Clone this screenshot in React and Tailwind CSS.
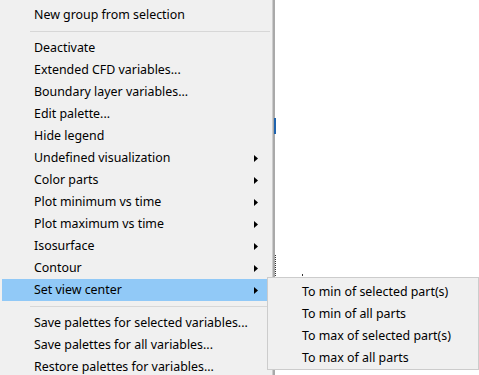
import React from "react";

const Arrow = () => (
  <svg width="4" height="7" viewBox="0 0 4 7" className="block">
    <path d="M0 0 L4 3.5 L0 7 Z" fill="#000" />
  </svg>
);

function Row({ label, sub, active }) {
  return (
    <div
      className={
        "h-[22px] flex items-center ml-[2px] pl-[32px] pr-[14px] " +
        (active ? "bg-[#91c9f7]" : "")
      }
    >
      <span className="flex-1 whitespace-nowrap leading-[20px]">{label}</span>
      {sub && <Arrow />}
    </div>
  );
}

const Sep = () => (
  <div className="h-[11px] flex items-center pl-[30px] pr-[2px]">
    <div className="h-px w-full bg-[#d7d7d7]" />
  </div>
);

export default function App() {
  const items = [
    ["Deactivate"],
    ["Extended CFD variables..."],
    ["Boundary layer variables..."],
    ["Edit palette..."],
    ["Hide legend"],
    ["Undefined visualization", true],
    ["Color parts", true],
    ["Plot minimum vs time", true],
    ["Plot maximum vs time", true],
    ["Isosurface", true],
    ["Contour", true],
  ];
  return (
    <div
      className="relative w-[479px] h-[375px] bg-white overflow-hidden text-[12.4px] text-black"
      style={{ fontFamily: '"Segoe UI", "Noto Sans", sans-serif' }}
    >
      <div className="flex h-full">
        <div className="w-[273px] h-full bg-[#f0f0f0] border-r border-[#cccccc] pt-[4px]">
          <Row label="New group from selection" />
          <Sep />
          {items.map(([l, s]) => (
            <Row key={l} label={l} sub={s} />
          ))}
          <Row label="Set view center" sub active />
          <Sep />
          <Row label="Save palettes for selected variables..." />
          <Row label="Save palettes for all variables..." />
          <Row label="Restore palettes for variables..." />
        </div>
        <div className="w-[2px] h-full bg-[#a9a9a9]" />
        <div className="flex-1 h-full bg-white" />
      </div>

      {/* background content hints */}
      <div className="absolute left-[274px] top-[118px] w-[2px] h-[16px] bg-[#1f63ad]" />
      <div className="absolute left-[275px] top-[255px] w-px h-[21px] border-l border-dotted border-[#333]" />
      <div className="absolute left-[302px] top-[274px] w-px h-[2px] bg-[#333]" />

      {/* submenu */}
      <div className="absolute left-[267px] top-[277px] w-[212px] h-[93px] bg-[#f0f0f0] border border-[#cccccc] pt-[3px]">
        {[
          "To min of selected part(s)",
          "To min of all parts",
          "To max of selected part(s)",
          "To max of all parts",
        ].map((t) => (
          <div key={t} className="h-[22px] flex items-center pl-[34px] whitespace-nowrap leading-[20px]">
            {t}
          </div>
        ))}
      </div>
    </div>
  );
}
